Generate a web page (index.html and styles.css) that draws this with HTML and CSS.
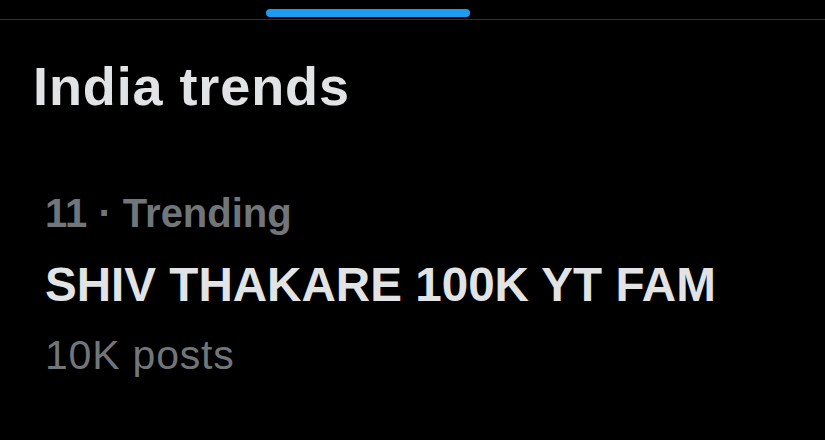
FILE: index.html
```html
<!DOCTYPE html>
<html>
<head>
<meta charset="utf-8">
<link rel="stylesheet" href="styles.css">
</head>
<body>
<div class="tabs">
  <div class="tab-indicator"></div>
</div>
<h1 class="title">India trends</h1>
<div class="trend">
  <div class="meta">11 · Trending</div>
  <div class="name">SHIV THAKARE 100K YT FAM</div>
  <div class="posts">10K posts</div>
</div>
</body>
</html>
```
FILE: styles.css
```css
html, body {
  margin: 0;
  padding: 0;
  background: #000;
  width: 825px;
  height: 440px;
  overflow: hidden;
  font-family: "Liberation Sans", Arial, sans-serif;
}
.tabs {
  height: 19px;
  border-bottom: 1px solid #2f3336;
  display: flex;
  align-items: flex-end;
  padding-left: 266px;
}
.tab-indicator {
  width: 204px;
  height: 8px;
  border-radius: 4px;
  background: #1d9bf0;
  margin-bottom: 2px;
}
.title {
  margin: 39px 0 0;
  padding: 0 0 0 33px;
  font-size: 54px;
  letter-spacing: 0.9px;
  font-weight: 700;
  color: #e1e3e4;
  line-height: 54px;
}
.trend {
  padding-left: 45px;
  margin-top: 80px;
  display: flex;
  flex-direction: column;
}
.meta {
  color: #71767b;
  font-size: 40px;
  line-height: 40px;
  font-weight: 700;
}
.name {
  margin-top: 28px;
  color: #e1e3e4;
  font-size: 47.6px;
  line-height: 48px;
  font-weight: 700;
}
.posts {
  margin-top: 26px;
  color: #71767b;
  font-size: 41px;
  line-height: 41px;
  letter-spacing: 0.8px;
}
```
